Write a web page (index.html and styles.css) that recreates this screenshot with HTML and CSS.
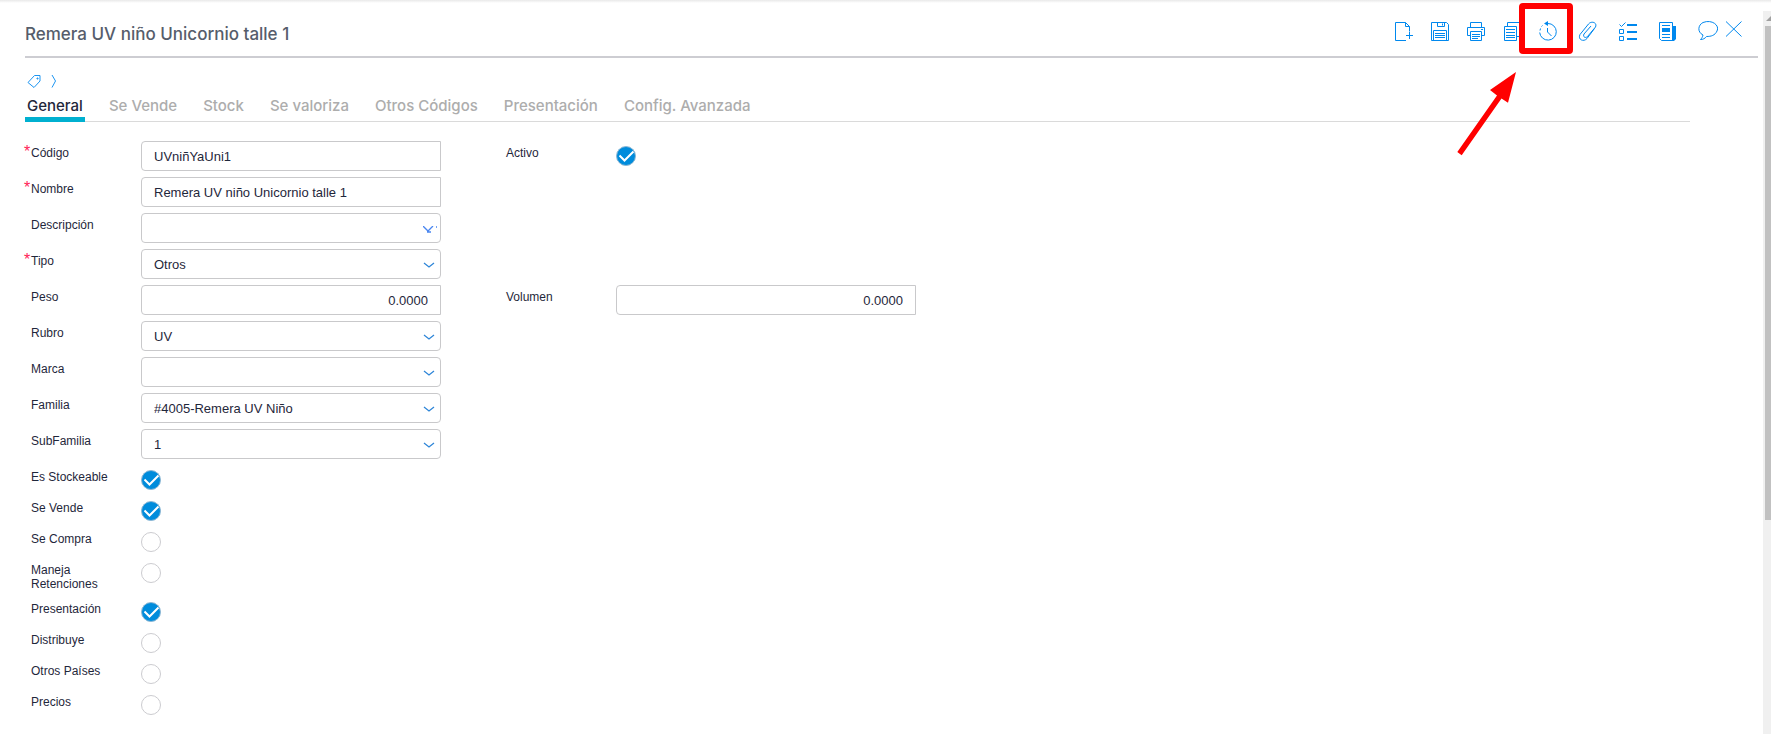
FILE: index.html
```html
<!DOCTYPE html>
<html lang="es">
<head>
    <meta charset="UTF-8">
    <meta name="viewport" content="width=device-width, initial-scale=1.0">
    <title>Remera UV niño Unicornio talle 1</title>
    <link rel="stylesheet" href="styles.css">
</head>
<body>
    <main class="page">
        <header class="header">
            <h1 class="title">Remera UV niño Unicornio talle 1</h1>
            <div class="toolbar">
                <div class="tools">
                    <button class="tool" aria-label="Nuevo">
                        <svg viewBox="0 0 20 20"><path d="M12 19.5H1.5v-18h10l4 4v5M11.5 1.5v4h4M15.5 11v7M12 14.5h7"/></svg>
                    </button>
                    <button class="tool" aria-label="Guardar">
                        <svg viewBox="0 0 20 20"><path d="M1.5 1.5h15l2 2v16h-17zM7.5 1.5v4h7v-4M12.5 2.5v2M3.5 19.5v-10h13v10M5 12.5h10M5 14.5h10M5 16.5h10"/></svg>
                    </button>
                    <button class="tool" aria-label="Imprimir">
                        <svg viewBox="0 0 20 20"><path d="M4.5 6V1.5h11V6M4.5 14.5h-3v-8h17v8h-3M4.5 10.5h11v9h-11zM6 13.5h8M6 15.5h8M6 17.5h6M15 8.5h2"/></svg>
                    </button>
                    <button class="tool" aria-label="Copiar">
                        <svg viewBox="0 0 20 20"><path d="M2.5 5.5h12v14h-12zM4 8.5h9M4 11.5h9M4 14.5h9M4 16.5h9M5.5 5.5v-4h13v14h-4"/></svg>
                    </button>
                    <div class="marked">
                        <button class="tool" aria-label="Historial">
                            <svg viewBox="0 0 20 20"><path d="M10 2.5a8.300 8.300 0 1 1-8.300 9M2 9.500l.5-2M3.500 5.500l1-1M9.500 7v4l4 4"/><path class="solid" d="M6 2.500l4-2.500v5z"/></svg>
                        </button>
                        <div class="mark-box"></div>
                        <svg class="mark-arrow" viewBox="0 0 64 88"><path d="M61 2L35 20l7 5.500L2.300 82l4.400 3.200L46.500 28.500 53 32.700z"/></svg>
                    </div>
                </div>
                <div class="tools tools-wide">
                    <button class="tool" aria-label="Adjuntos">
                        <svg viewBox="0 0 20 20"><path d="M16.500 7.500l-7.500 10c-3.500 4-9.500 1-7-4L10.500 3c3-3.500 9-1.500 7 3l-8 9.500c-2 2-5 .5-3.500-2.500L13 5"/></svg>
                    </button>
                    <button class="tool" aria-label="Tareas">
                        <svg viewBox="0 0 20 20"><path d="M1.500 3.500l2 2 4-4M1.500 8.500h4v4h-4zM1.500 15.500h4v4h-4z"/><path class="solid" d="M9 3h10v2H9zM9 10h10v2H9zM9 17h10v2H9z"/></svg>
                    </button>
                    <button class="tool" aria-label="Novedades">
                        <svg viewBox="0 0 20 20"><path d="M1.500 1.500h13v18h-11l-2-2zM4 4.500h8M4 13.500h8M4 16.500h8"/><path class="solid" d="M4 7h8v4H4zM14 5h4v13l-2 2h-2z"/></svg>
                    </button>
                    <button class="tool" aria-label="Comentarios">
                        <svg viewBox="0 0 20 20"><path d="M5 14C-1 11 0 4 5 1.500c9-3.500 17 3 14 8.500-2 4.500-6 5.500-10.500 5.500C7 17.500 5 18.500 2.500 18.500 4 17 4.500 16 5 14z"/></svg>
                    </button>
                </div>
                <button class="tool" aria-label="Cerrar">
                    <svg viewBox="0 0 20 20"><path d="M2 .5l15.500 15M17.500.5L2 15.500"/></svg>
                </button>
            </div>
        </header>

        <div class="crumbs">
            <svg class="crumb-tag" viewBox="0 0 15 15"><path d="M1 8.500l6.500-7H13v5.500L7 13.500z"/><path d="M10 4h1v1h-1z"/></svg>
            <svg class="crumb-next" viewBox="0 0 6 15"><path d="M1 1l3.500 6L1 13.500"/></svg>
        </div>

        <nav class="tabs">
            <a href="#" class="tab active">General</a>
            <a href="#" class="tab">Se Vende</a>
            <a href="#" class="tab">Stock</a>
            <a href="#" class="tab">Se valoriza</a>
            <a href="#" class="tab">Otros Códigos</a>
            <a href="#" class="tab">Presentación</a>
            <a href="#" class="tab">Config. Avanzada</a>
        </nav>

        <form class="form">
            <div class="row">
                <div class="field">
                    <label class="required" for="codigo">Código</label>
                    <input class="box" type="text" id="codigo" value="UVniñYaUni1">
                </div>
                <div class="field">
                    <label for="activo">Activo</label>
                    <input class="check" type="checkbox" id="activo" checked>
                </div>
            </div>
            <div class="row">
                <div class="field">
                    <label class="required" for="nombre">Nombre</label>
                    <input class="box" type="text" id="nombre" value="Remera UV niño Unicornio talle 1">
                </div>
            </div>
            <div class="row">
                <div class="field">
                    <label for="descripcion">Descripción</label>
                    <select class="box combo combo-text" id="descripcion"><option></option></select>
                </div>
            </div>
            <div class="row">
                <div class="field">
                    <label class="required" for="tipo">Tipo</label>
                    <select class="box combo" id="tipo"><option>Otros</option></select>
                </div>
            </div>
            <div class="row">
                <div class="field">
                    <label for="peso">Peso</label>
                    <input class="box number" type="text" id="peso" value="0.0000">
                </div>
                <div class="field">
                    <label for="volumen">Volumen</label>
                    <input class="box number" type="text" id="volumen" value="0.0000">
                </div>
            </div>
            <div class="row">
                <div class="field">
                    <label for="rubro">Rubro</label>
                    <select class="box combo" id="rubro"><option>UV</option></select>
                </div>
            </div>
            <div class="row">
                <div class="field">
                    <label for="marca">Marca</label>
                    <select class="box combo" id="marca"><option></option></select>
                </div>
            </div>
            <div class="row">
                <div class="field">
                    <label for="familia">Familia</label>
                    <select class="box combo" id="familia"><option>#4005-Remera UV Niño</option></select>
                </div>
            </div>
            <div class="row">
                <div class="field">
                    <label for="subfamilia">SubFamilia</label>
                    <select class="box combo" id="subfamilia"><option>1</option></select>
                </div>
            </div>
            <div class="row">
                <div class="field">
                    <label for="stockeable">Es Stockeable</label>
                    <input class="check" type="checkbox" id="stockeable" checked>
                </div>
            </div>
            <div class="row">
                <div class="field">
                    <label for="vende">Se Vende</label>
                    <input class="check" type="checkbox" id="vende" checked>
                </div>
            </div>
            <div class="row">
                <div class="field">
                    <label for="compra">Se Compra</label>
                    <input class="check" type="checkbox" id="compra">
                </div>
            </div>
            <div class="row">
                <div class="field">
                    <label for="retenciones">Maneja Retenciones</label>
                    <input class="check" type="checkbox" id="retenciones">
                </div>
            </div>
            <div class="row">
                <div class="field">
                    <label for="presentacion">Presentación</label>
                    <input class="check" type="checkbox" id="presentacion" checked>
                </div>
            </div>
            <div class="row">
                <div class="field">
                    <label for="distribuye">Distribuye</label>
                    <input class="check" type="checkbox" id="distribuye">
                </div>
            </div>
            <div class="row">
                <div class="field">
                    <label for="paises">Otros Países</label>
                    <input class="check" type="checkbox" id="paises">
                </div>
            </div>
            <div class="row">
                <div class="field">
                    <label for="precios">Precios</label>
                    <input class="check" type="checkbox" id="precios">
                </div>
            </div>
        </form>
    </main>

    <div class="scroll">
        <svg class="scroll-up" viewBox="0 0 8 15"><path d="M3 10l5-5v5z"/></svg>
        <div class="scroll-thumb"></div>
    </div>
</body>
</html>
```

FILE: styles.css
```css
* { box-sizing: border-box; }
body { margin: 0; min-height: 100vh; display: flex; background: linear-gradient(#e9e9e9, #fff 3px) #fff; background-repeat: no-repeat; font-family: "Liberation Sans", Arial, sans-serif; color: #1f273b; }
.page { flex: 1; min-width: 0; padding: 0 5px 0 25px; }

.header { display: flex; justify-content: space-between; height: 58px; padding: 21px 14px 0 0; border-bottom: 2px solid #cdcdd2; }
.title { margin: 0; font: 500 17px/26px Inter, sans-serif; color: #565d6b; }
.toolbar { display: flex; align-items: flex-start; }
.tools { display: flex; gap: 16px; margin-right: 20px; }
.tools-wide { gap: 20px; margin-right: 6px; }
.tool { width: 20px; height: 20px; padding: 0; border: 0; background: none; cursor: pointer; }
.tool svg { display: block; width: 20px; height: 20px; fill: none; stroke: #0088ee; }
.tool .solid { fill: #0088ee; stroke: none; }

/* red highlight over the history button */
.marked { position: relative; }
.mark-box { position: absolute; left: -19px; top: -18px; width: 54px; height: 51px; border: 6px solid #f00; border-radius: 4px; pointer-events: none; }
.mark-arrow { position: absolute; left: -83px; top: 49px; width: 64px; height: 88px; fill: #f00; pointer-events: none; }

.crumbs { display: flex; gap: 9px; padding: 16px 0 0 2px; }
.crumbs svg { display: block; height: 15px; fill: none; stroke: #1c95f2; }
.crumb-tag { width: 15px; }
.crumb-next { width: 6px; }

.tabs { display: flex; gap: 22px; height: 33px; margin-right: 68px; border-bottom: 1px solid #dadada; }
.tab { height: 33px; padding: 4px 2px 0; font: 500 15px/26px Inter, sans-serif; color: #adadad; text-decoration: none; white-space: nowrap; }
.tab.active { color: #1f273b; border-bottom: 5px solid #00b0d0; }

.form { padding: 19px 0 0 6px; }
.row { display: flex; flex-wrap: wrap; }
.field { display: flex; align-items: flex-start; width: 475px; padding-bottom: 6px; }
.field label { position: relative; width: 110px; padding: 5px 10px 0 0; font-size: 12px; line-height: 14px; }
.required::before { content: "*"; position: absolute; left: -7px; top: 3px; font-size: 16px; line-height: 16px; color: #ff2456; }
.box { width: 300px; height: 30px; padding: 0 12px; border: 1px solid #c9c9cb; border-radius: 4px 0 0 4px; background: #fff; font: 13px "Liberation Sans", Arial, sans-serif; color: #1f273b; }
.number { text-align: right; }
.combo { appearance: none; border-radius: 4px; background: #fff url("data:image/svg+xml,%3Csvg xmlns='http://www.w3.org/2000/svg' width='12' height='7' fill='none' stroke='%232f86d8' stroke-width='1.3'%3E%3Cpath d='M1 1l5 4 5-4'/%3E%3C/svg%3E") no-repeat right 5px bottom 9px; }
.combo-text { background-image: url("data:image/svg+xml,%3Csvg xmlns='http://www.w3.org/2000/svg' width='14' height='7' fill='none' stroke='%234a86f0' stroke-width='1.3'%3E%3Cpath d='M0 0l5 5 5-5M4 6h4M13 1h1'/%3E%3C/svg%3E"); background-position: right 3px bottom 9px; }
.check { appearance: none; flex: none; width: 20px; height: 20px; margin: 5px 0 0; border: 1px solid #ccccd0; border-radius: 50%; background: #fff; }
.check:checked { border-color: #8fb8d4; background: #008cdc url("data:image/svg+xml,%3Csvg xmlns='http://www.w3.org/2000/svg' width='18' height='18' fill='none' stroke='%23fff' stroke-width='2'%3E%3Cpath d='M2.500 8.500l5 5L16.500 4.500'/%3E%3C/svg%3E") no-repeat center; }

.scroll { width: 8px; margin-top: 11px; padding-left: 2px; background: #f0f0f0; }
.scroll-up { display: block; width: 8px; height: 15px; margin-left: -2px; fill: #a0a0a0; }
.scroll-thumb { height: 494px; background: #c1c1c1; }
```
